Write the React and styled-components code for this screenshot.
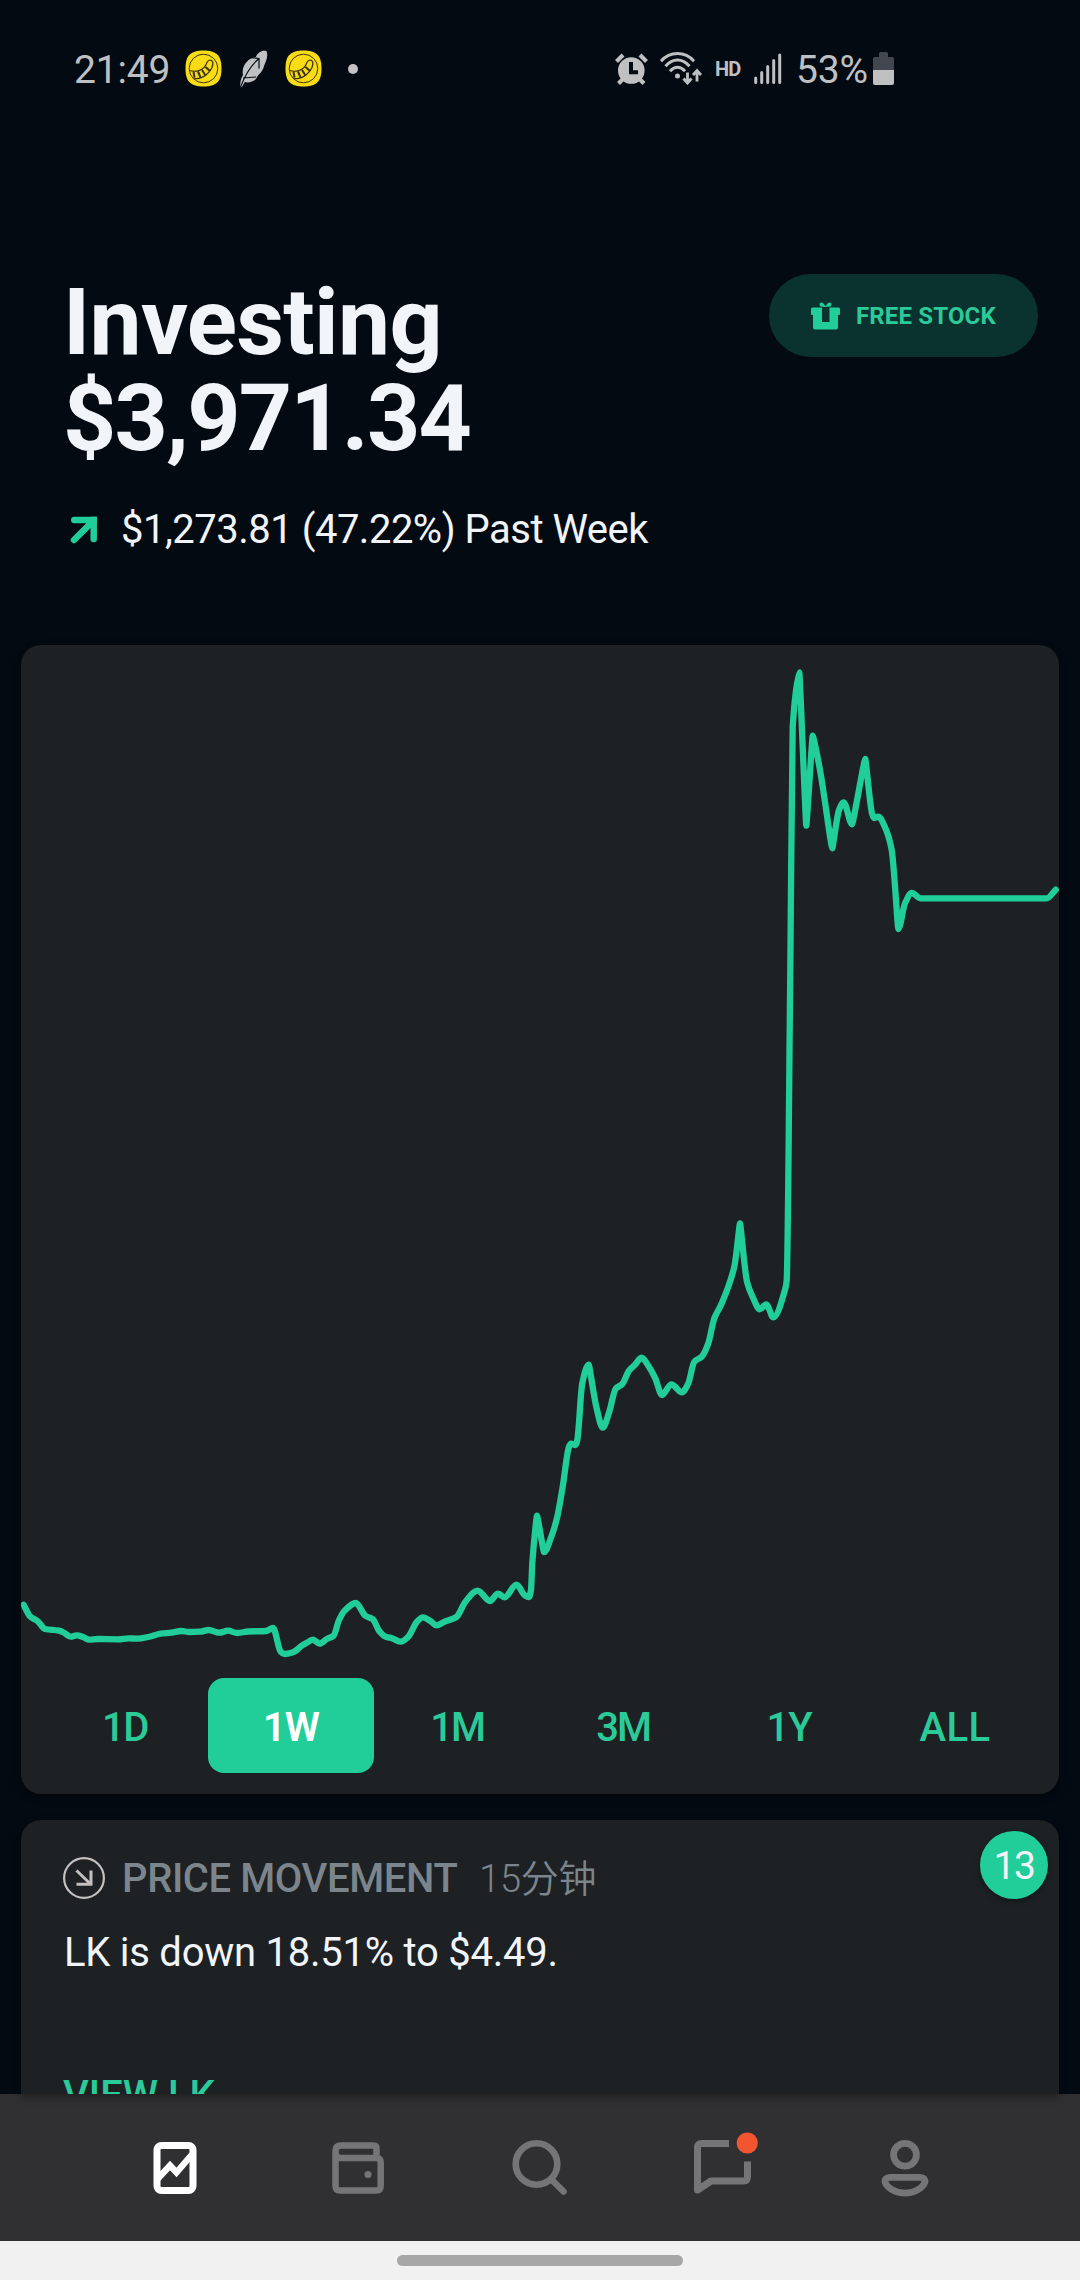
import styled, { createGlobalStyle } from "styled-components";
import { useState } from "react";

const POINTS = [
  [23.6, 1604.7], [30.4, 1616.7], [37.5, 1621], [45, 1629], [59, 1630.7], [64, 1632.7],
  [70.7, 1636.7], [76.8, 1635.3], [82.9, 1637], [89.3, 1639.7], [98, 1639], [118, 1639.3],
  [129, 1638.3], [137.5, 1638.7], [148, 1637], [160.7, 1633.7], [171.4, 1632.7], [181.4, 1631],
  [189.3, 1632], [200, 1631.7], [208.6, 1630], [219.3, 1632.7], [227.9, 1630.7], [237.5, 1633],
  [248, 1631.5], [266, 1631], [273, 1628], [280.7, 1651.7], [284.5, 1654], [292.9, 1652.3],
  [301.8, 1645.7], [306, 1643.3], [313, 1639.7], [319.6, 1643.7], [326.8, 1639], [333.6, 1635.7],
  [339, 1620], [344.6, 1610.7], [355.7, 1603], [365.4, 1615.7], [372.9, 1619.3], [379, 1630.7],
  [385.7, 1636.7], [392, 1638.3], [401, 1641.7], [408, 1637], [417, 1621.7], [422.9, 1617.3],
  [430.4, 1621], [436.4, 1625.3], [444.6, 1621.7], [456.4, 1617], [465.4, 1601.7], [477.5, 1590.7],
  [490, 1601], [497.9, 1593.7], [504.6, 1597.3], [516.4, 1584.7], [525, 1595.5], [529, 1597],
  [531, 1590], [532.3, 1563], [537, 1515.7], [544, 1552], [551.7, 1535.7], [557.3, 1516.7],
  [562.7, 1486.7], [569, 1446.7], [571, 1443.7], [575.7, 1445], [577.3, 1440], [582.3, 1383.3],
  [588.7, 1364.7], [596.3, 1406.7], [602.7, 1427.7], [609.3, 1411.7], [615.7, 1388.7], [622.3, 1384],
  [629, 1370.7], [635, 1364.7], [641.7, 1357.7], [648.3, 1365.7], [655.3, 1378.3], [662, 1395],
  [671.3, 1384.3], [682, 1392.3], [688.3, 1383.3], [694.3, 1361.7], [701.7, 1356.7], [708.3, 1343.3],
  [714.3, 1318.3], [721, 1305], [734.3, 1266.7], [740, 1223.3], [747, 1281.7], [753.3, 1298.3],
  [759.7, 1309.3], [766.3, 1304.3], [773.3, 1317.3], [785.4, 1288.3], [786.7, 1280], [790.3, 970],
  [792.7, 726.7], [799.3, 672.3], [806.3, 825.7], [812.7, 735.7], [820, 770], [832.3, 848.3],
  [839, 810], [843.7, 802.3], [852, 824.3], [865.3, 759], [872, 813.3], [874, 818],
  [878.3, 816.7], [885, 827.3], [891.7, 850], [898.3, 929], [905, 903.3], [911.7, 893],
  [920.7, 898.3], [1046.7, 898.3], [1055.7, 889.7],
];

// monotone cubic interpolation, keeps the peaks where the data has them
function linePath(points) {
  const slopes = points.slice(1).map(([x, y], i) => (y - points[i][1]) / (x - points[i][0]));
  const tangents = points.map((_, i) => {
    if (i === 0) return slopes[0];
    if (i === points.length - 1) return slopes[i - 1];
    const a = slopes[i - 1];
    const b = slopes[i];
    return a * b <= 0 ? 0 : (2 * a * b) / (a + b);
  });
  return points.slice(1).reduce((path, [x, y], i) => {
    const [px, py] = points[i];
    const h = (x - px) / 3;
    // steep peaks get a short handle so that they stay pointed
    const steep = Math.abs(slopes[i]) > 4;
    const h1 = steep && tangents[i] === 0 ? h * 0.3 : h;
    const h2 = steep && tangents[i + 1] === 0 ? h * 0.3 : h;
    const c1 = `${(px + h1).toFixed(1)},${(py + tangents[i] * h1).toFixed(1)}`;
    const c2 = `${(x - h2).toFixed(1)},${(y - tangents[i + 1] * h2).toFixed(1)}`;
    return `${path}C${c1} ${c2} ${x},${y}`;
  }, `M${points[0]}`);
}

const RANGES = [
  { label: "1D", spacing: "-1.5px" },
  { label: "1W", spacing: "-1px" },
  { label: "1M", spacing: "-2px" },
  { label: "3M", spacing: "-2px" },
  { label: "1Y", spacing: "-1px" },
  { label: "ALL", spacing: "0.5px" },
];

export default function App() {
  const [range, setRange] = useState("1W");

  return (
    <>
      <GlobalStyle />
      <Screen>
        <StatusBar>
          <Clock>21:49</Clock>
          <Notifications>
            <CoinIcon />
            <FeatherIcon />
            <CoinIcon />
            <MoreDot />
          </Notifications>
          <System>
            <AlarmIcon />
            <WifiIcon />
            <Hd>HD</Hd>
            <SignalIcon />
            <Percent>53%</Percent>
            <BatteryIcon />
          </System>
        </StatusBar>
        <Header>
          <div>
            <Title>Investing</Title>
            <Balance>$3,971.34</Balance>
            <Change>
              <ArrowIcon />
              <span>$1,273.81 (47.22%) Past Week</span>
            </Change>
          </div>
          <FreeStock type="button">
            <GiftIcon />
            FREE STOCK
          </FreeStock>
        </Header>
        <ChartCard>
          <Chart viewBox="21 645 1038 1033">
            <path d={linePath(POINTS)} />
          </Chart>
          <Ranges>
            {RANGES.map(({ label, spacing }) => (
              <Range
                key={label}
                type="button"
                $active={label === range}
                $spacing={spacing}
                onClick={() => setRange(label)}
              >
                {label}
              </Range>
            ))}
          </Ranges>
        </ChartCard>
        <NewsCard>
          <NewsHeader>
            <DownIcon />
            <NewsKind>PRICE MOVEMENT</NewsKind>
            <NewsTime>15分钟</NewsTime>
          </NewsHeader>
          <NewsText>LK is down 18.51% to $4.49.</NewsText>
          <NewsAction>VIEW LK</NewsAction>
          <Count>13</Count>
        </NewsCard>
        <Nav>
          <NavItem $active>
            <StocksIcon />
          </NavItem>
          <NavItem>
            <WalletIcon />
          </NavItem>
          <NavItem>
            <SearchIcon />
          </NavItem>
          <NavItem>
            <ChatIcon />
          </NavItem>
          <NavItem>
            <PersonIcon />
          </NavItem>
        </Nav>
        <GestureBar>
          <Handle />
        </GestureBar>
      </Screen>
    </>
  );
}

function CoinIcon() {
  return (
    <svg width="37" height="37" viewBox="0 0 37 37" fill="none">
      <path
        d="M18.500 0.500C31 0.500 36.500 5 36.500 18.500S31 36.500 18.500 36.500S0.500 32 0.500 18.500S6 0.500 18.500 0.500Z"
        fill="#f9dc14"
      />
      <circle cx="18.500" cy="18.500" r="14.300" stroke="#3a330f" strokeWidth="1" />
      <path
        d="M4.500 20.500C11 22.500 19 20.500 21.500 13.500C22.500 10 26 9 27.500 11.500C29 15 26 21 21.500 24.500C17 28 12 29.500 8.500 28"
        stroke="#3a330f"
        strokeWidth="1.200"
      />
      <path
        d="M8.500 21.500l1 6M13 21.500l2.500 6M17 20l3.500 5.500M20.500 17l4.500 4"
        stroke="#3a330f"
        strokeWidth="2"
      />
    </svg>
  );
}

function FeatherIcon() {
  return (
    <svg width="29" height="38" viewBox="0 0 29 38">
      <path
        d="M1 37C1.500 31 2 28 4 25C2 16 9 8 17 7C18 3 23 0 27.500 1C29.500 6 27 11 25 16C24 22 19 24 17 29C14 32 9 33 6 32C4.500 34 3.500 36 3 37Z"
        fill="#c0c1c4"
      />
      <path d="M1.500 37C5 28 11 16 20 8.500M11 7.500L20 8.500L20 18.500M4 28L17 27" stroke="#030a12" strokeWidth="1.200" fill="none" />
    </svg>
  );
}

function AlarmIcon() {
  return (
    <svg width="33" height="32" viewBox="0 0 33 32">
      <g stroke="#bfc0c2" strokeWidth="4.200">
        <path d="M1.500 8.500L8 2M25 2L31.500 8.500M3.500 30.500L8 26M29 30.500L24.500 26" />
      </g>
      <circle cx="16.300" cy="17.500" r="13.300" fill="#bfc0c2" />
      <path d="M16 9V19.200H23" stroke="#030a12" strokeWidth="4" fill="none" />
    </svg>
  );
}

function WifiIcon() {
  return (
    <svg width="42" height="33" viewBox="0 0 42 33" fill="none" stroke="#bfc0c2">
      <path d="M1 9.200C10 -1 25 -1 34 9.200" strokeWidth="3" />
      <path d="M5.500 14.200C12.500 6 22.500 6 29.500 14.200" strokeWidth="3" />
      <path d="M10 19.300C14.500 14 20.500 14 25 19.300" strokeWidth="3" />
      <circle cx="17.500" cy="24" r="2.500" fill="#bfc0c2" stroke="none" />
      <path d="M27.500 20.500V30M23.500 26.500L27.500 31L31.500 26.500M37 29.500V20M33 23L37 18.500L41 23" strokeWidth="2.800" />
    </svg>
  );
}

function SignalIcon() {
  return (
    <svg width="28" height="31" viewBox="0 0 28 31" stroke="#bfc0c2" strokeWidth="3" strokeLinecap="round">
      <path d="M1.700 25V29.500M7.700 19.500V29.500M13.700 13.500V29.500M19.700 7.500V29.500M25.700 2V29.500" />
    </svg>
  );
}

function BatteryIcon() {
  return (
    <svg width="21" height="33" viewBox="0 0 21 33">
      <path d="M6 1.500Q6 0 7.500 0H13.500Q15 0 15 1.500V5H19.500Q21 5 21 6.500V18H0V6.500Q0 5 1.500 5H6Z" fill="#42464e" />
      <path d="M0 18H21V31Q21 33 19 33H2Q0 33 0 31Z" fill="#bfc0c2" />
    </svg>
  );
}

function ArrowIcon() {
  return (
    <svg width="28" height="28" viewBox="0 0 28 28" fill="none" stroke="#21ce99" strokeWidth="6.500" strokeLinecap="round">
      <path d="M4.300 4H23.700V23" />
      <path d="M4 24L22.500 5.500" />
      <path d="M21 0.800H27V7Z" fill="#21ce99" stroke="none" />
    </svg>
  );
}

function GiftIcon() {
  return (
    <svg width="29" height="28" viewBox="0 0 29 28" fill="#21ce99">
      <path d="M1.500 5.500H11V20H18.500V5.500H27.500Q29 5.500 29 7V12Q29 13 28 13H27V25.500Q27 27.500 25 27.500H4Q2 27.500 2 25.500V13H1Q0 13 0 12V7Q0 5.500 1.500 5.500Z" />
      <path d="M14 5L9.500 4.500Q7.500 2 9.500 0.700Q12 -0.200 14.500 4.500Q17 -0.200 19.500 0.700Q21.500 2 19.500 4.500Z" />
    </svg>
  );
}

function DownIcon() {
  return (
    <svg width="42" height="42" viewBox="0 0 42 42" fill="none" stroke="#c4c0bf">
      <circle cx="21" cy="21" r="19.900" strokeWidth="2.200" />
      <path d="M13.500 13.500L27.500 27M28 13.500V27.300H13.500" strokeWidth="3" />
    </svg>
  );
}

function StocksIcon() {
  return (
    <svg width="44" height="58" viewBox="0 0 44 58" fill="none" stroke="currentColor" strokeWidth="7">
      <rect x="4" y="6.500" width="36" height="45" rx="4.500" />
      <path d="M4 40.500L17 26.500L23.500 33.500L39 15.500" strokeWidth="6.500" />
    </svg>
  );
}

function WalletIcon() {
  return (
    <svg width="52" height="58" viewBox="0 0 52 58" fill="none" stroke="currentColor" strokeWidth="6.500">
      <path d="M44.500 19V9.500Q44.500 6.500 41.500 6.500H9Q3.500 6.500 3.500 12V47Q3.500 51.500 8 51.500H44.500Q48.700 51.500 48.700 47V23.500Q48.700 19 44.500 19H8Q3.500 19 3.500 13" />
      <circle cx="36" cy="35.500" r="3.500" fill="currentColor" stroke="none" />
    </svg>
  );
}

function SearchIcon() {
  return (
    <svg width="56" height="58" viewBox="0 0 56 58" fill="none" stroke="currentColor" strokeWidth="6.600" strokeLinecap="round">
      <circle cx="24.500" cy="25" r="20.800" />
      <path d="M40 41L51.500 52.500" />
    </svg>
  );
}

function ChatIcon() {
  return (
    <svg width="72" height="72" viewBox="-8 7 72 72" fill="none" stroke="currentColor" strokeWidth="7">
      <path d="M35 18.500H8Q3.500 18.500 3.500 23V65L17 56H49.500Q53.500 56 53.500 51.500V36.500" strokeLinejoin="round" />
      <circle cx="53.300" cy="18" r="10.600" fill="#f45531" stroke="none" />
    </svg>
  );
}

function PersonIcon() {
  return (
    <svg width="48" height="58" viewBox="0 0 48 58" fill="none" stroke="currentColor" strokeWidth="6.800">
      <circle cx="24" cy="15.800" r="11.400" />
      <path d="M9 38.300H39Q44 38.500 44 43C42 49 33 54.200 24 54.200S6 49 4 43Q4 38.500 9 38.300Z" />
    </svg>
  );
}

const GlobalStyle = createGlobalStyle`
  * {
    box-sizing: border-box;
  }
  body {
    margin: 0;
    background-color: #030a12;
    font-family: Roboto, "Noto Sans CJK SC", sans-serif;
  }
  svg {
    display: block;
    flex-shrink: 0;
  }
  button {
    border: none;
    padding: 0;
    font-family: inherit;
  }
`;
const Screen = styled.div`
  display: flex;
  flex-direction: column;
  width: 1080px;
  height: 2280px;
  overflow: hidden;
  background-color: #030a12;
`;
const StatusBar = styled.div`
  display: flex;
  align-items: center;
  flex-shrink: 0;
  height: 137px;
  padding-left: 74px;
  color: #bfc0c2;
`;
const Clock = styled.span`
  width: 111px;
  padding-top: 2px;
  font-size: 39px;
  line-height: 46px;
  letter-spacing: -0.2px;
`;
const Notifications = styled.div`
  display: flex;
  align-items: center;
  gap: 17px;
  width: 430px;
`;
const MoreDot = styled.i`
  width: 10px;
  height: 10px;
  margin-left: 9px;
  border-radius: 50%;
  background-color: #c3c3c5;
`;
const System = styled.div`
  display: flex;
  align-items: center;

  svg:first-child {
    margin-right: 12px;
  }
`;
const Hd = styled.span`
  width: 39px;
  margin-left: 13px;
  font-size: 20px;
  font-weight: 700;
  letter-spacing: -0.8px;
`;
const Percent = styled.span`
  width: 77px;
  margin-left: 14px;
  padding-top: 2px;
  font-size: 39px;
  line-height: 46px;
  letter-spacing: -0.2px;
  white-space: nowrap;
`;
const Header = styled.header`
  display: flex;
  justify-content: space-between;
  align-items: flex-start;
  flex-shrink: 0;
  height: 371px;
  margin-top: 137px;
  padding: 0 42px 0 63px;
  color: #f1f4f8;
`;
const Title = styled.h1`
  margin: 0;
  padding-top: 1px;
  font-size: 93px;
  font-weight: 700;
  line-height: 96px;
  letter-spacing: -0.7px;
`;
const Balance = styled.div`
  font-size: 93px;
  font-weight: 700;
  line-height: 96px;
  letter-spacing: -1.8px;
`;
const Change = styled.div`
  display: flex;
  align-items: center;
  gap: 23px;
  margin-top: 39px;
  padding-left: 7px;
  font-size: 40px;
  line-height: 48px;
  letter-spacing: -0.5px;
  white-space: nowrap;
`;
const FreeStock = styled.button`
  display: flex;
  align-items: center;
  width: 269px;
  height: 83px;
  padding-left: 42px;
  gap: 16px;
  border-radius: 42px;
  background-color: #0a332f;
  color: #2bcb99;
  font-size: 24px;
  font-weight: 700;
  letter-spacing: 0.15px;
  white-space: nowrap;
`;
const Card = styled.section`
  flex-shrink: 0;
  margin: 0 21px;
  border-radius: 20px;
  background-color: #1d2123;
  box-shadow: 0 3px 8px rgba(0, 0, 0, 0.35);
`;
const ChartCard = styled(Card)`
  height: 1149px;
`;
const Chart = styled.svg`
  width: 1038px;
  height: 1033px;
  fill: none;
  stroke: #21ce99;
  stroke-width: 6.3px;
  stroke-linecap: round;
  stroke-linejoin: round;
`;
const Ranges = styled.div`
  display: flex;
  padding: 0 21px;
`;
const Range = styled.button`
  width: 166px;
  height: 95px;
  padding-top: 3px;
  border-radius: 16px;
  background-color: ${({ $active }) => ($active ? "#21ce99" : "transparent")};
  color: ${({ $active }) => ($active ? "#ffffff" : "#2bcb99")};
  font-size: 40px;
  font-weight: ${({ $active }) => ($active ? 600 : 500)};
  letter-spacing: ${({ $spacing }) => $spacing};
`;
const NewsCard = styled(Card)`
  position: relative;
  height: 274px;
  margin-top: 26px;
  padding: 34px 42px 0;
  border-radius: 20px 20px 0 0;
  overflow: hidden;
`;
const NewsHeader = styled.div`
  display: flex;
  align-items: center;
  height: 48px;
  color: #7b858b;
`;
const NewsKind = styled.span`
  width: 357px;
  margin-left: 17px;
  padding-top: 2px;
  font-size: 40px;
  font-weight: 500;
  line-height: 48px;
  letter-spacing: -0.4px;
  white-space: nowrap;
`;
const NewsTime = styled.span`
  padding-top: 1px;
  font-size: 38px;
  font-weight: 350;
  line-height: 48px;
  letter-spacing: -0.2px;
`;
const NewsText = styled.p`
  margin: 27px 0 0;
  padding-left: 1px;
  color: #f1f4f8;
  font-size: 40px;
  line-height: 48px;
  letter-spacing: -0.25px;
`;
const NewsAction = styled.div`
  margin-top: 95px;
  color: #2bcb99;
  font-size: 40px;
  font-weight: 500;
  line-height: 48px;
`;
const Count = styled.span`
  position: absolute;
  top: 11px;
  right: 11px;
  width: 68px;
  height: 68px;
  border-radius: 50%;
  background-color: #21ce99;
  box-shadow: 0 3px 6px rgba(0, 0, 0, 0.3);
  color: #f1f4f8;
  font-size: 39px;
  line-height: 70px;
  letter-spacing: -1.5px;
  text-align: center;
`;
const Nav = styled.nav`
  display: flex;
  flex-shrink: 0;
  height: 147px;
  padding: 0 84px;
  background-color: #303032;
`;
const NavItem = styled.a`
  display: flex;
  flex: 1;
  align-items: center;
  justify-content: center;
  color: ${({ $active }) => ($active ? "#ffffff" : "#757578")};
`;
const GestureBar = styled.div`
  display: flex;
  justify-content: center;
  flex-shrink: 0;
  height: 39px;
  padding-top: 14px;
  background-color: #f1f1f1;
`;
const Handle = styled.div`
  width: 286px;
  height: 11px;
  border-radius: 6px;
  background-color: #a7a7a7;
`;
